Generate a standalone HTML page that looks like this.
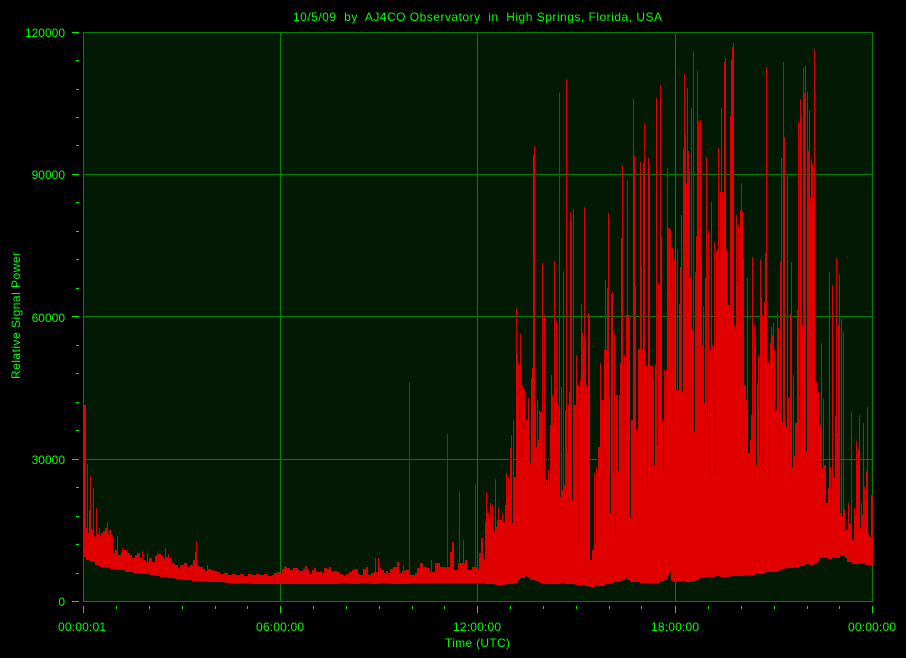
<!DOCTYPE html>
<html lang="en">
<head>
<meta charset="utf-8">
<title>AJ4CO Observatory</title>
<style>
html,body{margin:0;padding:0;background:#000;}
svg{display:block;}
text{font-family:"Liberation Sans",Arial,sans-serif;font-size:12px;fill:#00ff00;white-space:pre;}
</style>
</head>
<body>
<svg xmlns="http://www.w3.org/2000/svg" width="906" height="658" viewBox="0 0 906 658">
<rect width="906" height="658" fill="#000"/>
<rect x="83" y="32" width="790" height="570" fill="#021a03"/>
<g shape-rendering="crispEdges">
<path fill="none" stroke="#058005" d="M83.5 32.5H872.5V601.5H83.5ZM280.5 32V601M477.5 32V601M675.5 32V601M83 174.5H872M83 316.5H872M83 459.5H872"/>
<path fill="#e00000" d="M83 531H85V528H87V533H89V537H91V530H93V536H95V537H97V534H99V536H101V533H103V531H105V528H107V534H109V530H111V535H113V553H115V550H118V555H121V552H124V550H127V553H130V555H132V558H135V555H137V553H140V558H143V560H146V562H149V558H152V562H155V556H158V554H161V556H163V559H166V557H168V560H170V558H172V563H175V565H178V568H181V565H184V563H187V567H190V565H193V560H195V563H198V566H200V567H203V569H205V571H208V569H211V570H214V571H217V572H220V574H224V573H228V575H232V574H236V575H240V574H244V576H248V574H252V575H256V574H260V575H264V574H268V576H272V575H274V573H277V572H280V573H282V569H284V567H287V568H290V570H293V568H298V570H300V571H303V569H305V566H307V570H309V574H312V570H314V568H316V572H320V571H322V573H324V568H327V569H329V567H331V572H334V571H337V572H340V574H343V576H346V574H349V572H352V570H355V569H358V574H360V575H363V569H366V567H368V575H371V573H374V572H379V568H381V570H384V573H386V571H388V573H390V569H393V567H397V562H399V573H402V571H405V570H410V575H415V573H417V568H420V563H423V567H427V568H430V572H435V563H440V567H445V567H450V552H452V542H454V570H458V563H465V560H467V570H472V567H477V569H479V553H481V538H483V560H485V522H487V513H489V525H490V537H493V532H495V527H497V520H502V522H505V505H507V498H509V520H510V448H512V435H513V500H514V477H516V473H518V462H522V430H524V455H526V420H528V440H531V405H537V413H540V412H543V470H545V480H547V470H549V425H551V395H553V422H555V400H557V405H559V433H560V420H563V410H566V405H569V398H572V420H574V405H577V385H580V380H582V350H584V340H586V395H588V355H590V560H592V550H594V545H596V555H597V447H600V400H604V350H608V395H612V390H616V395H620V363H625V320H628V315H630V420H633V430H638V349H643V365H647V385H650V365H653V378H655V365H659V375H662V420H664V370H669V370H672V393H675V390H680V330H683V320H690V330H695V320H701V345H705V330H708V350H711V345H717V310H724V305H734V330H738V335H744V385H746V400H747V453H750V440H751V412H753V415H754V345H756V390H757V383H758V355H760V320H767V368H768V362H770V343H772V335H774V350H775V423H776V410H777V330H779V420H780V422H786V425H787V398H789V470H790V330H791V420H793V375H794V440H795V423H797V340H799V420H800V330H806V440H807V330H815V382H817V476H818V392H819V496H820V425H821V343H822V468H823V399H824V465H826V503H828V488H829V272H830V467H831V502H832V285H833V478H835V416H836V258H837V433H838V325H839V274H840V513H841V318H842V516H843V332H844V509H845V530H848V503H849V523H851V412H852V540H854V508H855V515H856V441H857V465H858V449H859V415H860V528H861V503H862V515H863V423H864V487H865V500H866V471H867V407H868V533H869V537H871V495H873V565H865V563H860V564H852V562H847V558H845V556H843V555H840V558H836V557H832V559H828V558H825V557H822V558H820V561H817V564H813V565H809V564H805V566H800V567H795V568H785V569H780V571H775V572H765V574H755V575H745V576H730V577H720V576H715V577H705V578H700V580H695V581H690V582H685V581H676V582H673V581H671V572H669V575H667V580H664V581H660V583H640V582H630V580H627V578H625V580H622V581H618V582H614V583H610V584H605V586H595V587H590V586H585V585H575V584H565V583H560V584H545V583H540V581H535V580H530V577H527V576H525V578H520V580H518V583H515V584H505V585H495V584H485V583H410V584H400V584H390V583H380V584H370V583H360V584H350V583H340V584H267V584H250V583H225V582H208V581H192V580H183V579H175V578H167V577H160V576H155V575H150V574H142V573H133V572H125V570H117V569H110V567H100V565H95V562H90V560H86V557H83Z"/>
<g transform="translate(.5 0)">
<path fill="none" stroke="#021a03" d="M509 320V522M512 320V523M519 320V462M521 320V422M523 320V458M530 320V463M536 320V447M538 320V440M545 320V485M547 320V487M549 320V487M557 320V433M560 320V497M562 320V490M564 320V485M567 320V453M572 320V500M576 320V490M579 320V543M587 320V448M597 320V480M603 320V538M610 320V513M613 320V472M615 320V537M618 320V472M623 320V427M625 320V437M630 320V518M635 320V508M637 320V483M645 320V448M647 320V488M651 320V473M654 320V465M657 320V447M663 320V473M665 320V425M673 320V425M678 320V375M682 320V392M693 320V396M694 320V432M703 320V412M704 320V403M707 320V420M709 320V477M711 320V410M713 320V388M715 320V477M723 320V407M736 320V435M744 320V385M748 320V452M749 320V440M751 320V415M754 320V415M756 320V465M759 320V455M763 320V470M769 320V480M773 320V438M775 320V423M779 320V447M782 320V422M786 320V427M789 320V483M792 320V467M794 320V456M800 320V426M806 320V451"/>
<path fill="none" stroke="#e00000" d="M84 405V540M85 405V540M85 498V540M87 464V540M89 510V540M90 476V540M93 488V540M96 508V540M99 528V540M107 522V545M117 536V560M122 548V560M142 551V565M147 553V565M157 553V565M165 548V565M168 554V565M180 565V570M185 563V570M195 552V570M196 541V570M207 565V575M285 566V575M375 558V575M378 558V575M403 565V575M431 560V575M463 540V575M486 492V560M490 503V560M492 505V560M495 479V560M498 507V560M502 513V560M506 473V560M508 477V560M511 435V560M513 420V560M516 308V560M517 353V560M518 363V560M520 334V560M522 385V560M524 390V560M528 398V560M531 378V560M532 368V560M533 155V560M534 146V560M537 400V560M539 410V560M542 263V560M544 315V560M551 375V560M554 261V560M556 321V560M559 93V560M561 387V560M563 271V560M566 79V560M569 392V560M570 212V560M571 221V560M573 209V560M576 355V560M578 386V560M581 304V560M582 333V560M583 360V560M584 207V560M586 385V560M588 313V560M589 315V560M594 473V560M596 467V560M600 363V560M604 351V560M605 280V560M607 288V560M608 213V560M611 294V560M612 292V560M614 334V560M617 453V560M620 363V560M621 238V560M622 165V560M624 355V560M626 315V560M627 180V560M633 99V560M634 156V560M635 286V560M640 162V560M641 266V560M643 163V560M644 123V560M648 158V560M649 166V560M656 98V560M658 283V560M660 85V560M661 236V560M667 168V560M668 228V560M669 228V560M670 230V560M671 292V560M672 248V560M674 259V560M677 249V560M679 304V560M680 267V560M681 215V560M683 149V560M684 74V560M685 135V560M686 184V560M687 88V560M688 151V560M689 172V560M690 278V560M691 108V560M693 51V560M695 272V560M696 236V560M697 71V560M698 121V560M699 237V560M700 120V560M701 257V560M703 306V560M705 278V560M706 157V560M708 231V560M711 202V560M714 242V560M716 251V560M717 250V560M718 148V560M719 261V560M720 192V560M721 108V560M722 192V560M723 220V560M724 62V560M725 58V560M726 250V560M727 303V560M728 306V560M730 116V560M731 60V560M732 47V560M733 43V560M734 325V560M736 215V560M737 287V560M738 225V560M739 325V560M740 210V560M741 183V560M742 211V560M743 258V560M747 278V560M752 257V560M754 326V560M760 259V560M761 297V560M762 315V560M764 302V560M765 253V560M766 67V560M771 327V560M773 323V560M777 313V560M778 328V560M780 261V560M781 158V560M783 62V560M784 137V560M787 175V560M790 314V560M791 262V560M797 310V560M798 122V560M800 99V560M801 116V560M802 325V560M803 68V560M804 93V560M805 66V560M807 92V560M808 151V560M809 110V560M810 197V560M811 159V560M812 164V560M813 202V560M814 49V560"/>
<path fill="none" stroke="#a81008" d="M409 382V575M447 434V575M459 491V575M475 484V575"/>
</g>
<path fill="none" stroke="#00f000" d="M72 32.5H79M76 60.5H79M76 89.5H79M76 117.5H79M76 145.5H79M72 174.5H79M76 202.5H79M76 231.5H79M76 259.5H79M76 288.5H79M72 316.5H79M76 345.5H79M76 373.5H79M76 402.5H79M76 430.5H79M72 459.5H79M76 487.5H79M76 516.5H79M76 544.5H79M76 573.5H79M72 601.5H79M83.5 606V613M116.5 606V609M149.5 606V609M182.5 606V609M215.5 606V609M247.5 606V609M280.5 606V613M313.5 606V609M346.5 606V609M379.5 606V609M412.5 606V609M444.5 606V609M477.5 606V613M510.5 606V609M543.5 606V609M576.5 606V609M609.5 606V609M641.5 606V609M675.5 606V613M708.5 606V609M741.5 606V609M774.5 606V609M807.5 606V609M839.5 606V609M872.5 606V613"/>
</g>
<text x="293" y="21" textLength="369" lengthAdjust="spacing">10/5/09  by  AJ4CO Observatory  in  High Springs, Florida, USA</text>
<g text-anchor="end">
<text x="65" y="37">120000</text>
<text x="65" y="179">90000</text>
<text x="65" y="322">60000</text>
<text x="65" y="464">30000</text>
<text x="65" y="606">0</text>
</g>
<text x="58" y="631" textLength="48">00:00:01</text>
<text x="256" y="631" textLength="48">06:00:00</text>
<text x="453" y="631" textLength="48">12:00:00</text>
<text x="651" y="631" textLength="48">18:00:00</text>
<text x="848" y="631" textLength="48">00:00:00</text>
<text x="445" y="647" textLength="65">Time (UTC)</text>
<text transform="translate(20 379) rotate(-90)" textLength="127">Relative Signal Power</text>
</svg>
</body>
</html>
